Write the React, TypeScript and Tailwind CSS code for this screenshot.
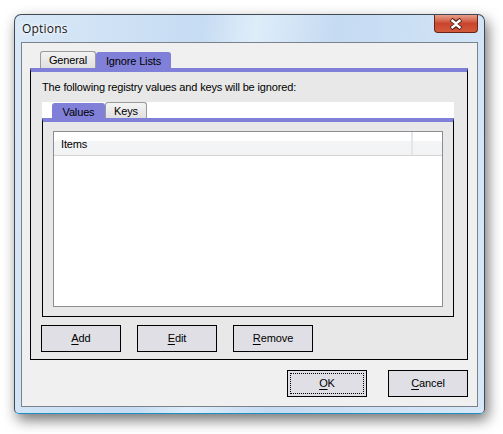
import React, { useState } from 'react';

const Btn: React.FC<{ label: string; focus?: boolean }> = ({ label, focus }) => (
  <button className="relative w-[80px] h-[27px] border border-black bg-[#dfdfe5] text-[11px] tracking-[-0.1px] text-black flex items-center justify-center">
    {focus && <span className="absolute inset-[2px] border border-dotted border-black" />}
    <span>
      <span className="underline underline-offset-2">{label[0]}</span>
      {label.slice(1)}
    </span>
  </button>
);

const CloseButton = () => (
  <div className="w-[44px] h-[18px] rounded-b-[4px] border border-[#6b2418] border-t-0 bg-gradient-to-b from-[#e8a08c] via-[#c9442c] to-[#d45a3c] flex items-center justify-center">
    <svg width="16" height="12" viewBox="0 0 16 12">
      <path d="M3 1.5 L8 5 L13 1.5 M3 10.5 L8 7 L13 10.5" fill="none" stroke="#4a1a14" strokeWidth="4.2" strokeLinejoin="round" />
      <path d="M3.5 2 L8 5.4 L12.5 2 M3.5 10 L8 6.6 L12.5 10" fill="none" stroke="#ffffff" strokeWidth="2.4" />
    </svg>
  </div>
);

export default function App() {
  const [tab, setTab] = useState<'general' | 'ignore'>('ignore');
  const [sub, setSub] = useState<'values' | 'keys'>('values');

  return (
    <div className="w-[503px] h-[434px] bg-white pt-[14px] pl-[14px]" style={{ fontFamily: '"Liberation Sans", Arial, sans-serif' }}>
      {/* window frame */}
      <div className="relative w-[471px] h-[400px] rounded-t-[7px] rounded-b-[5px] border border-[#3f4a55] border-b-[#1f8fc0] bg-[linear-gradient(100deg,#d9e8f7_0%,#c6dcf3_35%,#dfedf9_45%,#c5dbf2_60%,#d8e8f8_100%)] shadow-[3px_6px_14px_rgba(0,0,0,0.55)] flex flex-col px-[6px] pb-[6px]">
        <div className="h-[27px] flex items-start justify-between">
          <span className="mt-[5px] ml-[1px] text-[12px] text-[#151515] tracking-[0.2px]" style={{ fontFamily: '"Open Sans", "Noto Sans", sans-serif', textShadow: '0 0 6px #ffffff, 0 0 3px #ffffff' }}>
            Options
          </span>
          <CloseButton />
        </div>

        {/* client area */}
        <div className="flex-1 border border-[#7a838c] bg-[#f0f0f0] pl-[8px] text-[11px] tracking-[-0.15px]">
          {/* outer tabs */}
          <div className="flex items-end h-[25px] pl-[10px]">
            <button
              onClick={() => setTab('general')}
              className={`h-[17px] w-[56px] rounded-t-[3px] border border-b-0 ${tab === 'general' ? 'bg-[#8080d8] border-[#8080d8]' : 'bg-gradient-to-b from-[#f2f2f2] to-[#e0e0e0] border-[#9a9a9a]'} text-black`}
            >
              General
            </button>
            <button
              onClick={() => setTab('ignore')}
              className={`h-[16px] w-[75px] rounded-t-[3px] border border-b-0 ${tab === 'ignore' ? 'bg-[#8080d8] border-[#8080d8]' : 'bg-gradient-to-b from-[#f2f2f2] to-[#e0e0e0] border-[#9a9a9a]'} text-black`}
            >
              Ignore Lists
            </button>
          </div>

          {/* tab panel */}
          <div className="w-[438px] h-[292px] border border-black border-t-[4px] border-t-[#8080d8] bg-[#e8e8e8] pl-[11px] flex flex-col">
            <div className="mt-[8px] h-[14px] leading-[14px] text-black">
              The following registry values and keys will be ignored:
            </div>

            <div className="mt-[8px] w-[412px] h-[16px] bg-white flex items-end pl-[10px]">
              <button
                onClick={() => setSub('values')}
                className={`h-[15px] w-[53px] rounded-t-[3px] border border-b-0 ${sub === 'values' ? 'bg-[#8080d8] border-[#8080d8]' : 'bg-gradient-to-b from-[#f2f2f2] to-[#e0e0e0] border-[#9a9a9a]'} text-black`}
              >
                Values
              </button>
              <button
                onClick={() => setSub('keys')}
                className={`h-[16px] w-[42px] rounded-t-[3px] border border-b-0 ${sub === 'keys' ? 'bg-[#8080d8] border-[#8080d8]' : 'bg-gradient-to-b from-[#f4f4f4] to-[#e0e0e0] border-[#9a9a9a]'} text-black`}
              >
                Keys
              </button>
            </div>

            {/* inner panel */}
            <div className="w-[412px] h-[199px] border border-black border-t-[4px] border-t-[#8080d8] bg-[#e8e8e8] pl-[10px] pt-[9px]">
              <div className="w-[390px] h-[176px] border border-[#8a8d92] bg-white flex flex-col">
                <div className="h-[24px] flex border-b border-[#d5d5d5] bg-[linear-gradient(#ffffff_0%,#ffffff_40%,#f3f4f6_41%,#f2f3f5_100%)] text-black">
                  <div className="w-[359px] pl-[7px] pt-[2px] flex items-center border-r-2 border-[#e4e5e7]">Items</div>
                  <div className="flex-1" />
                </div>
              </div>
            </div>

            <div className="mt-[8px] -ml-[1px] flex gap-[16px]">
              <Btn label="Add" />
              <Btn label="Edit" />
              <Btn label="Remove" />
            </div>
          </div>

          <div className="w-[438px] mt-[10px] flex justify-end gap-[21px]">
            <Btn label="OK" focus />
            <Btn label="Cancel" />
          </div>
        </div>
      </div>
    </div>
  );
}
